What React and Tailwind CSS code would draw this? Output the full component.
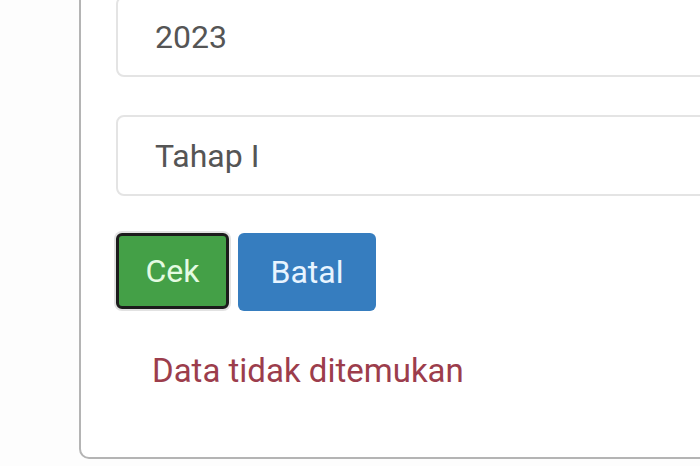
export default function App() {
  return (
    <div
      className="w-[700px] h-[466px] overflow-hidden bg-[#fdfdfd] pl-[79px]"
      style={{ fontFamily: "Roboto, 'Noto Sans', sans-serif" }}
    >
      <div className="-mt-[30px] w-[700px] h-[489px] border-2 border-[#b4b4b4] rounded-[10px] bg-white pl-[35px] pt-[24px]">
        <div className="flex flex-col gap-[38px]">
          <div className="h-[81px] w-[640px] rounded-[8px] border-2 border-[#e4e4e4] flex items-center pl-[37px] text-[32px] text-[#555]">
            2023
          </div>
          <div className="h-[81px] w-[640px] rounded-[8px] border-2 border-[#e4e4e4] flex items-center pl-[37px] text-[32px] text-[#555]">
            Tahap I
          </div>
        </div>
        <div className="mt-[37px] flex items-start gap-[9px]">
          <button className="w-[113px] h-[76px] rounded-[6px] bg-[#44a047] border-[3px] border-[#1c1c1c] ring-2 ring-[#e2e2e2] text-[32px] text-[#e4fbe2]">
            Cek
          </button>
          <button className="w-[138px] h-[78px] rounded-[6px] bg-[#367dbf] text-[32px] text-[#e8f4ff]">
            Batal
          </button>
        </div>
        <div className="mt-[35px] pl-[36px] text-[33px] text-[#9c3d4c]">
          Data tidak ditemukan
        </div>
      </div>
    </div>
  );
}
